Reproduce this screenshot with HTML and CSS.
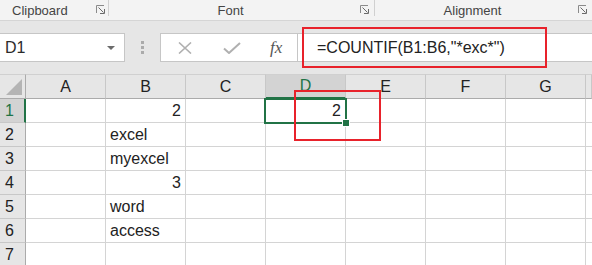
FILE: index.html
```html
<!DOCTYPE html>
<html lang="en">
<head>
    <meta charset="UTF-8">
    <meta name="viewport" content="width=device-width, initial-scale=1.0">
    <title>COUNTIF</title>
    <link rel="stylesheet" href="styles.css">
</head>
<body>

<div class="window">
    <!-- Группы ленты -->
    <div class="ribbon">
        <div class="group group-clipboard">
            <span class="group-label">Clipboard</span>
            <svg class="launcher" width="9" height="9" viewBox="0 0 9 9"><path d="M0.5 8V0.5H8" fill="none" stroke="#8a8a8a"/><path d="M2.5 2.5L7.5 7.5M4 8.5H8.5V4" fill="none" stroke="#6a6a6a"/></svg>
        </div>
        <span class="group-sep"></span>
        <div class="group group-font">
            <span class="group-label">Font</span>
            <svg class="launcher" width="9" height="9" viewBox="0 0 9 9"><path d="M0.5 8V0.5H8" fill="none" stroke="#8a8a8a"/><path d="M2.5 2.5L7.5 7.5M4 8.5H8.5V4" fill="none" stroke="#6a6a6a"/></svg>
        </div>
        <span class="group-sep"></span>
        <div class="group group-align">
            <span class="group-label">Alignment</span>
            <svg class="launcher" width="9" height="9" viewBox="0 0 9 9"><path d="M0.5 8V0.5H8" fill="none" stroke="#8a8a8a"/><path d="M2.5 2.5L7.5 7.5M4 8.5H8.5V4" fill="none" stroke="#6a6a6a"/></svg>
        </div>
    </div>

    <!-- Строка формул -->
    <div class="formula-bar">
        <div class="name-box">
            <span>D1</span>
            <span class="name-arrow"></span>
        </div>
        <div class="grip"><i></i><i></i><i></i></div>
        <div class="fx-buttons">
            <svg class="fx-cancel" width="16" height="12" viewBox="0 0 16 12"><path d="M2 0.5L14 11.5M14 0.5L2 11.5" stroke="#b0b0b0" stroke-width="1.6" fill="none"/></svg>
            <svg class="fx-ok" width="18" height="12" viewBox="0 0 18 12"><path d="M1 6.5L6 11L17 1" stroke="#b0b0b0" stroke-width="2" fill="none"/></svg>
            <span class="fx-label">fx</span>
        </div>
        <div class="formula-input">=COUNTIF(B1:B6,"*exc*")</div>
        <div class="mark mark-formula"></div>
    </div>

    <!-- Лист -->
    <div class="sheet">
        <div class="hd corner"><span class="corner-tri"></span></div>
        <div class="hd col">A</div>
        <div class="hd col">B</div>
        <div class="hd col">C</div>
        <div class="hd col active">D</div>
        <div class="hd col">E</div>
        <div class="hd col">F</div>
        <div class="hd col">G</div>
        <div class="hd col"></div>

        <div class="hd row active">1</div>
        <div class="cell"></div>
        <div class="cell num">2</div>
        <div class="cell"></div>
        <div class="cell num selected">2<span class="sel-box"></span><span class="fill-handle"></span></div>
        <div class="cell"></div>
        <div class="cell"></div>
        <div class="cell"></div>
        <div class="cell"></div>

        <div class="hd row">2</div>
        <div class="cell"></div>
        <div class="cell">excel</div>
        <div class="cell"></div>
        <div class="cell"></div>
        <div class="cell"></div>
        <div class="cell"></div>
        <div class="cell"></div>
        <div class="cell"></div>

        <div class="hd row">3</div>
        <div class="cell"></div>
        <div class="cell">myexcel</div>
        <div class="cell"></div>
        <div class="cell"></div>
        <div class="cell"></div>
        <div class="cell"></div>
        <div class="cell"></div>
        <div class="cell"></div>

        <div class="hd row">4</div>
        <div class="cell"></div>
        <div class="cell num">3</div>
        <div class="cell"></div>
        <div class="cell"></div>
        <div class="cell"></div>
        <div class="cell"></div>
        <div class="cell"></div>
        <div class="cell"></div>

        <div class="hd row">5</div>
        <div class="cell"></div>
        <div class="cell">word</div>
        <div class="cell"></div>
        <div class="cell"></div>
        <div class="cell"></div>
        <div class="cell"></div>
        <div class="cell"></div>
        <div class="cell"></div>

        <div class="hd row">6</div>
        <div class="cell"></div>
        <div class="cell">access</div>
        <div class="cell"></div>
        <div class="cell"></div>
        <div class="cell"></div>
        <div class="cell"></div>
        <div class="cell"></div>
        <div class="cell"></div>

        <div class="hd row">7</div>
        <div class="cell"></div>
        <div class="cell"></div>
        <div class="cell"></div>
        <div class="cell"></div>
        <div class="cell"></div>
        <div class="cell"></div>
        <div class="cell"></div>
        <div class="cell"></div>
    </div>

    <div class="mark mark-result"></div>
</div>

</body>
</html>
```

FILE: styles.css
```css
body {
    margin: 0;
    padding: 0;
    font-family: "Liberation Sans", Arial, sans-serif;
    color: #222;
    background: #fff;
}

.window {
    position: relative;
    width: 592px;
    height: 265px;
    overflow: hidden;
    background: #e6e6e6;
}

/* Лента */
.ribbon {
    display: flex;
    align-items: flex-start;
    height: 20px;
    background: #f3f3f3;
    border-bottom: 1px solid #d5d5d5;
    font-size: 13px;
    color: #444;
}

.group {
    display: flex;
    align-items: center;
    height: 20px;
}

.group-label {
    flex: 1;
    text-align: center;
}

.group-clipboard {
    width: 108px;
}

.group-clipboard .group-label {
    flex: none;
    margin-left: 12px;
    margin-right: 28px;
}

.group-font {
    width: 265px;
}

.group-align {
    flex: 1;
}

.launcher {
    margin: 0 5px 1px 8px;
}

.group-clipboard .launcher {
    margin: 0 0 1px 0;
}

.group-sep {
    width: 1px;
    height: 16px;
    background: #d0d0d0;
}

/* Строка формул */
.formula-bar {
    position: relative;
    display: flex;
    align-items: center;
    height: 29px;
    padding: 12px 0 12px;
}

.name-box {
    display: flex;
    align-items: center;
    justify-content: space-between;
    box-sizing: border-box;
    width: 126px;
    height: 29px;
    padding: 0 9px 0 5px;
    margin-left: -1px;
    background: #fff;
    border: 1px solid #c6c6c6;
    font-size: 16px;
    color: #2b2b2b;
}

.name-arrow {
    width: 0;
    height: 0;
    border-left: 4px solid transparent;
    border-right: 4px solid transparent;
    border-top: 4px solid #6b6b6b;
}

.grip {
    display: flex;
    flex-direction: column;
    gap: 2px;
    margin: 0 16px 0 16px;
}

.grip i {
    display: block;
    width: 3px;
    height: 3px;
    background: #ababab;
}

.fx-buttons {
    display: flex;
    align-items: center;
    box-sizing: border-box;
    width: 138px;
    height: 29px;
    padding-left: 16px;
    background: #fff;
    border: 1px solid #c6c6c6;
}

.fx-ok {
    margin-left: 30px;
}

.fx-label {
    margin-left: 29px;
    font-family: "Liberation Serif", "Times New Roman", serif;
    font-style: italic;
    font-size: 17px;
    color: #555;
}

.formula-input {
    flex: 1;
    box-sizing: border-box;
    height: 29px;
    line-height: 28px;
    padding-left: 19px;
    margin-left: -1px;
    background: #fff;
    border: 1px solid #c6c6c6;
    border-right: none;
    font-size: 16px;
    color: #222;
}

/* Красные рамки */
.mark {
    position: absolute;
    border: 2px solid #e8222b;
    box-sizing: border-box;
    z-index: 3;
}

.mark-formula {
    left: 302px;
    top: 6px;
    width: 245px;
    height: 41px;
}

.mark-result {
    left: 294px;
    top: 90px;
    width: 87px;
    height: 51px;
}

/* Лист */
.sheet {
    display: grid;
    grid-template-columns: 26px repeat(7, 80px) 6px;
    grid-template-rows: 25px repeat(7, 24px);
    background: #fff;
    font-size: 16px;
}

.hd {
    box-sizing: border-box;
    background: #e6e6e6;
    color: #222;
}

.col {
    display: flex;
    align-items: center;
    justify-content: center;
    border-right: 1px solid #c8c8c8;
    border-bottom: 1px solid #ababab;
    border-top: 1px solid #d0d0d0;
}

.col.active {
    background: #d3d3d3;
    color: #217346;
    border-bottom: 2px solid #217346;
}

.corner {
    position: relative;
    border-right: 1px solid #ababab;
    border-bottom: 1px solid #ababab;
    border-top: 1px solid #d0d0d0;
}

.corner-tri {
    position: absolute;
    right: 3px;
    bottom: 3px;
    width: 0;
    height: 0;
    border-left: 16px solid transparent;
    border-bottom: 16px solid #b4b4b4;
}

.row {
    display: flex;
    align-items: center;
    padding-left: 5px;
    border-right: 1px solid #ababab;
    border-bottom: 1px solid #c8c8c8;
}

.row.active {
    background: #d3d3d3;
    color: #217346;
    border-right: 2px solid #217346;
}

.cell {
    position: relative;
    box-sizing: border-box;
    display: flex;
    align-items: flex-end;
    padding: 0 4px 2px 4px;
    border-right: 1px solid #d4d4d4;
    border-bottom: 1px solid #d4d4d4;
    white-space: nowrap;
}

.cell.num {
    justify-content: flex-end;
}

.cell.selected {
    z-index: 2;
}

.sel-box {
    position: absolute;
    left: -2px;
    top: -1px;
    right: -2px;
    bottom: -2px;
    border: 2px solid #217346;
}

.fill-handle {
    position: absolute;
    right: -5px;
    bottom: -5px;
    width: 6px;
    height: 6px;
    background: #217346;
    border: 1px solid #fff;
}
```
